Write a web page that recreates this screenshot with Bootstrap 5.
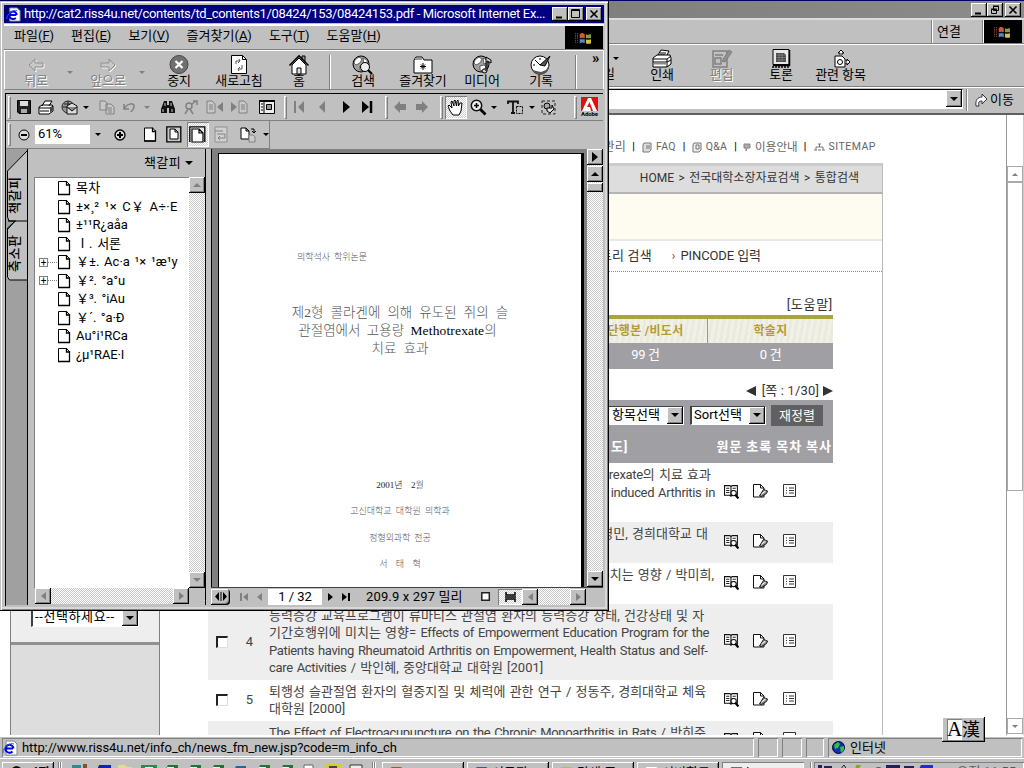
<!DOCTYPE html>
<html lang="ko">
<head>
<meta charset="utf-8">
<meta name="viewport" content="width=device-width, initial-scale=1">
<title>RISS4U</title>
<link href="https://cdn.jsdelivr.net/npm/bootstrap@5.3.0/dist/css/bootstrap.min.css" rel="stylesheet">
<style>
*{box-sizing:border-box}
body{width:1024px;height:768px;overflow:hidden;background:#c0c0c0;color:#000;font-family:Roboto,"Noto Sans CJK KR",sans-serif;font-size:13px;line-height:16px;white-space:nowrap}
svg{display:block;flex:none;overflow:visible}
.desk{position:relative;width:1024px;height:768px;overflow:hidden}
.raise{background:#c0c0c0;box-shadow:inset -1px -1px #000,inset 1px 1px #fff,inset -2px -2px #808080}
.sink{box-shadow:inset 1px 1px #808080,inset -1px -1px #fff}
.dither{background:repeating-conic-gradient(#fff 0 25%,#c8c8c8 0 50%) 0 0/2px 2px}
.ui-gray{background:#c0c0c0}
.cap{width:16px;height:14px;flex:none}
.off{color:#808080;text-shadow:1px 1px #fff}
.dn{width:0;height:0;border:4px solid transparent;border-top-color:#000;border-bottom:0}
.dn3{width:0;height:0;border:3px solid transparent;border-top-color:#000;border-bottom:0}
.dim{border-top-color:#808080}
/* main browser */
.m-title{height:18px;background:linear-gradient(90deg,#808080 60%,#8c8c8c);border-top:1px solid #000060;padding-right:3px}
.m-menu{height:26px;border-top:2px solid #dcdcdc;border-bottom:1px solid #808080}
.m-tool{height:43px;border-top:1px solid #fff;border-bottom:1px solid #808080;padding-left:600px}
.m-addr{height:24px;padding-top:1px;border-top:1px solid #fff}
.addr-in{width:963px;height:20px;background:#fff;border:1px solid #fff;border-top-color:#000;border-left-color:#000}
.m-body{height:622px;background:#fff;border-top:2px solid #606060;overflow:hidden;position:relative;margin-top:2px;flex:none}
.bt{display:flex;flex-direction:column;align-items:center;line-height:14px;letter-spacing:-.1px}
.side{width:150px;margin-left:10px;background:#ddd;border-right:1px solid #808080;border-left:1px solid #808080}
.side .upper{height:530px;background:#eee;border-bottom:3px solid #909090}
.combo{height:19px;background:#fff;border:1px solid #fff;border-top:1px solid #404040;border-left:2px solid #404040;color:#000;line-height:15px}
.mainc{width:723px}
.crumb{height:31px;background:#ddd;border-top:3px solid #ccc;border-bottom:2px solid #b4b4b4;border-right:1px solid #bbb;padding:0 23px 0 0;color:#333;line-height:24px;font-size:12px;word-spacing:1.500px}
.inner{height:592px;border-right:1px solid #bbb}
.res{width:625px;margin-left:48px}
.th-tex{height:28px;border-top:4px solid #a8a444;background:repeating-linear-gradient(100deg,#f2f1e8 0 3px,#ebeadf 3px 6px);color:#b59a35;font-weight:700;font-size:12px;letter-spacing:.3px}
.grayrow{background:#a0a0a4;color:#fff}
.hit{padding:3px 0;line-height:17.5px;color:#444;word-spacing:1px}
.hit:nth-child(even){background:#eee}
.hit .tx{width:447px;margin-left:2px}
.hit>svg{margin-bottom:2px}
.la{letter-spacing:-.33px}
.num{width:35px;text-align:center}
.chk{width:12px;height:12px;background:#fff;border:1px solid #ddd;border-top:2px solid #222;border-left:2px solid #222;margin-left:8px}
.sbar{width:16px;border-left:1px solid #999}
.sbtn{width:16px;height:16px;border:1px solid #aaa;background:#fff;flex:none}
.status{height:23px;border-top:2px solid #fff;padding:1px 2px;gap:4px;flex:none}
.pane{height:19px;box-shadow:inset 1px 1px #808080,inset -1px -1px #fff}
.task{height:10px;overflow:hidden;border-top:1px solid #fff;position:relative}
.tbt{height:24px;width:82px;padding:3px 8px;line-height:15px}
/* popup */
.pop{position:absolute;left:0;top:0;width:609px;height:611px;border-right:1px solid #000;border-bottom:1px solid #000;box-shadow:inset 1px 1px #c0c0c0,inset 2px 2px #fff,inset -1px -1px #808080,inset -3px -3px #d8d8d8;padding:5px 4px 4px;overflow:hidden;border-top:1px solid #000050}
.p-title{height:18px;background:#000080;color:#fff;padding:0 2px 0 2px;margin-top:-1px;letter-spacing:-.36px}
.p-menu{height:26px;border-top:2px solid #fff;border-bottom:1px solid #808080;padding-left:10px}
.p-menu span{line-height:20px}
.p-tool{height:40px;border:1px solid #fff;border-bottom-color:#808080;grid-template-columns:62px 10px 62px 10px 60px 60px 60px 4px 60px 60px 58px 60px 8px 1fr}
.vs{width:2px;background:#808080;border-right:1px solid #fff;align-self:stretch}
.grip{width:3px;height:23px;border:1px solid #fff;border-right-color:#808080;border-bottom-color:#808080}
.ac{height:513px;border-top:1px solid #000;border-left:1px solid #000;margin-top:3px;width:598px;margin-left:1px}
.a1{height:27px;border-bottom:1px solid #808080;grid-template-columns:7px 22px 22px 24px 10px 5px 22px 24px 10px 5px 22px 23px 25px 23px 6px 22px 5px 5px 22px 24px 23px 21px 6px 5px 22px 22px 5px 7px 22px 22px 10px 5px 23px 10px 22px 4px 10px 5px 23px}
.a2{height:28px;border-bottom:1px solid #808080;width:264px;border-right:1px solid #808080;grid-template-columns:7px 22px 55px 16px 27px 6px 22px 25px 23px 23px 5px 23px 11px}
.a1>*,.a2>*{justify-self:center;align-self:center}
.press{background:repeating-conic-gradient(#fff 0 25%,#d0d0d0 0 50%) 0 0/2px 2px;box-shadow:inset 1px 1px #808080,inset -1px -1px #fff;width:22px;height:23px;display:grid;place-items:center}
.zin{width:55px;height:19px;background:#fff;line-height:18px;padding-left:3px}
.tabs{width:22px;background:#a0a0a0;border-right:1px solid #000;position:relative}
.vt{position:absolute;transform:rotate(-90deg);transform-origin:0 0;left:1px;font-weight:500;line-height:16px;letter-spacing:.5px}
.bk{width:177px}
.tree{width:155px;height:411px;background:#fff;border-left:1px solid #808080;border-top:1px solid #808080;margin-left:6px;padding-top:1px}
.bi{height:18.5px;padding-left:22px;word-spacing:1.500px}
.bi span{margin-left:5px}
.pm{width:9px;height:9px;border:1px solid #808080;font-size:10px;line-height:7px;text-align:center}
.dots{width:9px;border-top:1px dotted #808080}
.sb{width:16px;height:16px;display:grid;place-items:center;flex:none}
.doc{width:376px;height:438px;background:#808080;padding:4px 0 0 6px;border-left:1px solid #000}
.sheet{width:366px;height:434px;background:#fff;border-top:1px solid #000;border-left:1px solid #000;border-right:3px solid #000;font-family:"Liberation Serif","Noto Sans CJK KR",serif;color:#555;font-weight:300;text-align:center}
.sheet div{height:18px;line-height:18px}
.ime{position:absolute;left:942px;top:717px;width:43px;height:25px;font-family:"Liberation Serif","Noto Sans CJK KR",serif;font-size:21px;line-height:22px}
</style>
</head>
<body>
<svg width="0" height="0" class="position-absolute">
<defs>
<symbol id="page" viewBox="0 0 14 16"><path d="M1.5 1.5h8l3 3v10h-11z" fill="#fff" stroke="#000"/><path d="M9.5 1v4H13M12.5 4v11M1 14.5h12" fill="none" stroke="#000" stroke-width="1.3"/></symbol>
<symbol id="book" viewBox="0 0 14 14"><path d="M.5 1.5h5l1 1 1-1h5v9h-5l-1 1-1-1h-5zM6.500 2v9" fill="#fff" stroke="#111"/><path d="M2 4h3M2 6h3M2 8h3M8 4h3M8 6h2" stroke="#222"/><circle cx="9" cy="8.500" r="2.500" fill="#fff" stroke="#111"/><path d="M10.500 10l3 3.500" stroke="#000" stroke-width="2"/></symbol>
<symbol id="abs" viewBox="0 0 15 14"><path d="M.5 .5h7l3.500 3.500v9H.5z" fill="#fff" stroke="#111"/><path d="M7.500 .5v3.500H11" stroke="#111" fill="none"/><path d="M6.500 12l4-6.500 4 1.500-1 2.500-5 3z" fill="#999" stroke="#111"/><path d="M8.500 10l4-3" stroke="#fff"/></symbol>
<symbol id="toc" viewBox="0 0 13 14"><path d="M.5.5h12v12H.5z" fill="#fff" stroke="#333"/><path d="M3 4h1M6 4h5M3 6.500h1M6 6.500h5M3 9h1M6 9h5" stroke="#333" stroke-width="1.200"/></symbol>
<symbol id="flag" viewBox="0 0 16 14"><path d="M4 4c2-2 3-1 5 0v4c-2-1-3-1-5 0z" fill="#d05a30"/><path d="M9.500 4c2 1 3 0 5 0v4c-2 1-3 1-5 0z" fill="#80a040"/><path d="M4 8.500c2-1 3-1 5 0v4c-2-1-3-1-5 0z" fill="#5888c8"/><path d="M9.500 8.500c2 1 3 1 5 0v4c-2 1-3 0-5 0z" fill="#d8c040"/><path d="M9.200 3v10M4 8.200h11" stroke="#000"/><path d="M0 3v10M2 3v10" stroke="#a05050" stroke-dasharray="1 1"/></symbol>
<symbol id="ie" viewBox="0 0 16 16"><path d="M4 1h8l3 3v11H4z" fill="#fff" stroke="#888"/><path d="M11.500 8.500a4 4 0 1 0-1 3M4 8.500h7" fill="none" stroke="#0000e0" stroke-width="2"/><path d="M1 13C0 8 8 2 12 4" fill="none" stroke="#2060ff"/></symbol>
<symbol id="globe" viewBox="0 0 20 20"><circle cx="9" cy="9" r="8" fill="#a0a0a0" stroke="#000"/><path d="M3 5l4-3 3 2-2 4-4 2-2-2zM11 3l4 2v3l-3 1zM8 11l4-1 2 2-3 4-3-1z" fill="#fff" stroke="#333" stroke-width=".7"/></symbol>
<symbol id="rt" viewBox="0 0 8 12"><path d="M1 0l7 6-7 6z"/></symbol>
</defs></svg>
<div class="desk">
<!-- main browser window -->
<div class="d-flex flex-column h-100 ui-gray">
  <div class="m-title d-flex justify-content-end align-items-center">
    <div class="cap raise"><svg width="16" height="14"><path d="M4 10.500h6" stroke="#000" stroke-width="2"/></svg></div>
    <div class="cap raise"><svg width="16" height="14"><path d="M6.500 3.500h5v4h-5zM4.500 6.500h5v4h-5z" fill="#c0c0c0" stroke="#000"/><path d="M6 3h6M4 6h6" stroke="#000"/></svg></div>
    <div class="cap raise" style="margin-left:2px"><svg width="16" height="14"><path d="M4.500 3.500l7 7M11.500 3.500l-7 7" stroke="#000" stroke-width="1.600"/></svg></div>
  </div>
  <div class="m-menu d-flex justify-content-end">
    <div class="vs"></div><div style="width:49px" class="ps-1 pt-1">연결</div><div class="vs"></div>
    <div class="bg-black d-grid" style="width:38px;place-items:center"><svg width="18" height="15"><use href="#flag"/></svg></div>
    <div style="width:2px"></div>
  </div>
  <div class="m-tool d-flex pt-1">
    <div class="d-flex flex-column" style="width:29px"><div class="dn3 ms-auto mt-2" style="margin-right:10px"></div><div style="margin-top:6px;margin-left:3px">일</div></div>
    <div class="bt" style="width:66px"><svg width="20" height="19"><path d="M6 6l3-5 8 1-3 6" fill="#fff" stroke="#000"/><path d="M8 4h6M7 6h6" stroke="#000"/><path d="M1 9l4-3h13l1 3v6l-4 3H1z" fill="#fff" stroke="#000"/><path d="M1 10h14l4-3M1 13h14l4-2M15 10v8" fill="none" stroke="#000"/><path d="M2 14.500h13" stroke="#888" stroke-width="2"/></svg>인쇄</div>
    <div class="bt off" style="width:53px"><svg width="20" height="19"><path d="M1 2h14v16H1zM3 6h8M3 9h6v6H3z" fill="none" stroke="#808080" stroke-width="1.500"/><path d="M10 12l7-11 3 2-7 10z" fill="#909090" stroke="#808080"/></svg>편집</div>
    <div class="bt" style="width:66px"><svg width="20" height="19"><path d="M2 .5h16v15H2z" fill="#e8e8e8" stroke="#000"/><path d="M1 18h18" stroke="#000" stroke-width="1.500" stroke-dasharray="2 1"/><path d="M18.500 1v15.500H2" stroke="#000" fill="none" stroke-width="1.500"/><path d="M5 4h8l2 2v7H5z" fill="#444"/><path d="M5 6h10M5 8.500h10M5 11h10M8 4v9M11 4v9" stroke="#999" stroke-width=".6"/></svg>토론</div>
    <div class="bt" style="width:53px"><svg width="20" height="19"><path d="M4 7h7l3 3v8H4z" fill="#fff" stroke="#000"/><circle cx="9" cy="13" r="2.500" fill="none" stroke="#000"/><path d="M9 6V4H7l3-3 3 3h-2v2M14 12h2v-2l3 3-3 3v-2h-2" fill="#fff" stroke="#000"/></svg>관련 항목</div>
  </div>
  <div class="m-addr d-flex">
    <div class="addr-in d-flex justify-content-end"><div class="raise d-grid" style="width:16px;height:17px;place-items:center"><div class="dn"></div></div></div>
    <div class="vs" style="margin-left:3px"></div>
    <div class="d-flex align-items-center" style="padding-left:7px"><svg width="13" height="14"><path d="M1 13C0 7 3 4 7 4V1l5 5-5 5V8C4 8 3 9 4 13z" fill="#fff" stroke="#333"/></svg><span style="margin-left:2px">이동</span></div>
  </div>
  <div class="m-body d-flex">
    <div class="side"><div class="upper d-flex flex-column justify-content-end align-items-start"><div class="combo d-flex" style="width:108px;margin:0 0 15px 20px;padding-left:2px"><span style="letter-spacing:.6px">--선택하세요--</span><div class="raise ms-auto d-grid" style="width:16px;place-items:center"><div class="dn"></div></div></div></div></div>
    <div class="mainc">
      <div class="d-flex justify-content-end align-items-center" style="height:48px;padding:16px 7px 0 0;color:#666;font-size:10.500px;letter-spacing:.3px">
        <span style="font-size:12px">관리</span><b class="text-black" style="margin:0 7px 0 6px;font-size:10px">|</b>
        <svg width="10" height="11"><path d="M2 1h7v7L7 10H1V3z" fill="#ddd" stroke="#777"/><path d="M4 4h4M4 6h4" stroke="#777"/></svg><span class="ms-1">FAQ</span><b class="text-black" style="margin:0 6px 0 7px;font-size:10px">|</b>
        <svg width="10" height="11"><path d="M2 1h7v7L7 10H1V3z" fill="#eee" stroke="#777"/><path d="M4 3h3v4H4z" fill="none" stroke="#777"/></svg><span class="ms-1">Q&amp;A</span><b class="text-black" style="margin:0 6px 0 7px;font-size:10px">|</b>
        <svg width="8" height="9"><path d="M1 1h6v4H4L3 8V5H1z" fill="#aaa" stroke="#888"/></svg><span style="font-size:11.500px;margin-left:4px;letter-spacing:.1px">이용안내</span><b class="text-black" style="margin:0 7px 0 6px;font-size:10px">|</b>
        <svg width="11" height="8"><path d="M5.500 1v3M2 7V4h7v3M0 7h3M4 7h3M8 7h3M4 1h3" fill="none" stroke="#777"/></svg><span class="ms-1" style="letter-spacing:.5px">SITEMAP</span>
      </div>
      <div class="crumb text-end">HOME &gt; 전국대학소장자료검색 &gt; 통합검색</div>
      <div class="inner">
        <div style="height:47px;background:#fefbf0;border-bottom:2px solid #e8e8e8"></div>
        <div class="d-flex align-items-center" style="height:31px;padding-left:440px;border-bottom:1px dotted #888;color:#333"><span style="letter-spacing:.15px">토리 검색</span><span style="color:#c02020;margin:0 5px 0 20px;font-size:12px">›</span><span style="letter-spacing:-.1px">PINCODE 입력</span></div>
        <div class="res">
          <div class="text-end" style="height:43px;padding-top:25px;color:#333;letter-spacing:.7px">[도움말]</div>
          <div class="th-tex d-flex align-items-center"><div class="text-center d-grid align-items-center h-100" style="width:500px;border-right:1px solid #b59a35;grid-template-columns:375px 125px"><span></span><span>단행본 /비도서</span></div><div class="text-center flex-fill">학술지</div></div>
          <div class="grayrow d-flex" style="height:26px;line-height:24px;letter-spacing:-.3px"><div class="text-center" style="width:125px;margin-left:375px">99 건</div><div class="flex-fill text-center">0 건</div></div>
          <div class="d-flex justify-content-end align-items-center" style="height:31px;padding-top:12px;color:#333"><svg width="10" height="12"><path d="M10 1v10L0 6z" fill="#333"/></svg><span style="margin:0 4px 0 6px;letter-spacing:.15px">[쪽 : <span style="color:#b01030">1</span>/30]</span><svg width="10" height="12"><path d="M0 1v10l10-5z" fill="#333"/></svg></div>
          <div class="grayrow" style="height:63px">
            <div class="d-flex justify-content-end align-items-center" style="height:30px;padding-right:10px">
              <div class="combo d-flex ps-1" style="width:78px;margin-right:6px"><span>항목선택</span><div class="raise ms-auto d-grid" style="width:16px;place-items:center"><div class="dn"></div></div></div>
              <div class="combo d-flex" style="width:76px;padding-left:2px;margin-right:5px"><span>Sort선택</span><div class="raise ms-auto d-grid" style="width:16px;place-items:center"><div class="dn"></div></div></div>
              <div class="text-center" style="width:52px;height:21px;line-height:21px;background:#606060">재정렬</div>
            </div>
            <div class="d-flex fw-bold" style="height:33px;line-height:33px"><span style="margin-left:403px;letter-spacing:.8px">도]</span><span class="ms-auto" style="letter-spacing:1px;margin-right:1px;word-spacing:-.3px">원문 초록 목차 복사</span></div>
          </div>
          <div>
            <div class="hit d-flex align-items-center"><div class="chk"></div><div class="num ms-1">1</div><div class="tx"><div class="d-flex justify-content-end" style="padding-right:5px">제2형 콜라겐에 의해 유도된 쥐의 슬관절염에서 고용량&nbsp;<span class="la">Methotrexate</span>의 치료 효과</div><div class="text-end la" style="padding-right:1px">Effects of high dose methotrexate on Type II Collagen induced Arthritis in</div><div>rats</div></div><svg class="ms-2" width="15" height="15"><use href="#book"/></svg><svg width="15" height="14" style="margin-left:14px"><use href="#abs"/></svg><svg width="13" height="14" style="margin-left:15px"><use href="#toc"/></svg></div>
            <div class="hit d-flex align-items-center"><div class="chk"></div><div class="num ms-1">2</div><div class="tx"><div class="text-end" style="padding-right:8px">류마티스 관절염 환자의 삶의 질에 관한 연구 / 이영민, 경희대학교 대</div><div>학원 [2001]</div></div><svg class="ms-2" width="15" height="15"><use href="#book"/></svg><svg width="15" height="14" style="margin-left:14px"><use href="#abs"/></svg><svg width="13" height="14" style="margin-left:15px"><use href="#toc"/></svg></div>
            <div class="hit d-flex align-items-center"><div class="chk"></div><div class="num ms-1">3</div><div class="tx"><div class="text-end" style="padding-right:2px">수중운동이 류마티스 관절염 환자에 미치는 영향 / 박미희,</div><div>대학원 [2001]</div></div><svg class="ms-2" width="15" height="15"><use href="#book"/></svg><svg width="15" height="14" style="margin-left:14px"><use href="#abs"/></svg><svg width="13" height="14" style="margin-left:15px"><use href="#toc"/></svg></div>
            <div class="hit d-flex align-items-center"><div class="chk"></div><div class="num ms-1">4</div><div class="tx">능력증강 교육프로그램이 류마티스 관절염 환자의 능력증강 상태, 건강상태 및 자<br>기간호행위에 미치는 영향= <span class="la">Effects of Empowerment Education Program for the</span><br><span class="la">Patients having Rheumatoid Arthritis on Empowerment, Health Status and Self-</span><br><span class="la">care Activities</span> / 박인혜, 중앙대학교 대학원 [2001]</div><svg class="ms-2" width="15" height="15"><use href="#book"/></svg><svg width="15" height="14" style="margin-left:14px"><use href="#abs"/></svg><svg width="13" height="14" style="margin-left:15px"><use href="#toc"/></svg></div>
            <div class="hit d-flex align-items-center"><div class="chk"></div><div class="num ms-1">5</div><div class="tx">퇴행성 슬관절염 환자의 혈중지질 및 체력에 관한 연구 / 정동주, 경희대학교 체육<br>대학원 [2000]</div><svg class="ms-2" width="15" height="15"><use href="#book"/></svg><svg width="15" height="14" style="margin-left:14px"><use href="#abs"/></svg><svg width="13" height="14" style="margin-left:15px"><use href="#toc"/></svg></div>
            <div class="hit d-flex"><div class="chk invisible"></div><div class="num ms-1"></div><div class="tx"><span class="la">The Effect of Electroacupuncture on the Chronic Monoarthritis in Rats</span> / 박히준,</div><svg class="ms-2" width="15" height="15" style="margin-top:8px"><use href="#book"/></svg><svg width="15" height="14" style="margin:8px 0 0 14px"><use href="#abs"/></svg><svg width="13" height="14" style="margin:8px 0 0 15px"><use href="#toc"/></svg></div>
          </div>
        </div>
      </div>
    </div>
    <div class="ms-auto d-flex flex-column sbar" style="padding-top:51px;margin-right:1px">
      <div class="sbtn d-grid" style="place-items:center"><div class="dn3 dim" style="transform:rotate(180deg)"></div></div>
      <div class="sbtn" style="height:309px"></div>
      <div class="sbtn d-grid mt-auto" style="place-items:center;margin-bottom:1px"><div class="dn3 dim"></div></div>
    </div>
    <div style="width:1px;background:#ccc"></div>
  </div>
  <div class="status d-flex">
    <div class="pane d-flex align-items-center" style="width:752px"><svg width="16" height="16"><use href="#ie"/></svg><span style="margin-left:4px;letter-spacing:-.09px">http://www.riss4u.net/info_ch/news_fm_new.jsp?code=m_info_ch</span></div>
    <div class="pane" style="width:20px"></div><div class="pane" style="width:20px"></div><div class="pane" style="width:18px"></div>
    <div class="pane flex-fill d-flex align-items-center ps-1"><svg width="13" height="13"><circle cx="6.500" cy="6.500" r="6" fill="#1030b0" stroke="#003"/><path d="M2 4l4-3 2 2-2 4-3 1zM8 6l4-1v4l-3 3z" fill="#30c040"/></svg><span style="margin-left:5px">인터넷</span></div>
  </div>
  <div class="task d-flex" style="padding-top:3px">
    <div class="tbt raise fw-bold" style="width:52px;margin-left:2px">● 시작</div>
    <div class="vs ms-1"></div><div class="vs"></div>
    <svg width="300" height="8" style="margin-left:10px"><path d="M0 3h9v5H0z" fill="#308898"/><path d="M11 2h4v6h-4z" fill="#805030"/><path d="M27 3h12v5H25z" fill="#1020c0"/><path d="M46 3h7l2 2h5v3H46z" fill="#e0dc90"/><path d="M69 3h16v5H69z" fill="#308848"/><path d="M73 5h8v3h-8z" fill="#fff"/><path d="M96 3h10v5H93zM119 3h10v5h-12zM142 3h10v5h-12zM188 3h10v5h-12zM211 3h10v5h-12z" fill="#287038"/><path d="M95 5h7v3h-7zM118 5h7v3h-7zM141 5h7v3h-7zM187 5h7v3h-7zM210 5h7v3h-7z" fill="#eee"/><path d="M164 4h10v4h-12z" fill="#2860b0"/><path d="M232 3h9v5h-9z" fill="#fff" stroke="#666"/><path d="M253 2h16v6h-16z" fill="#d8d020"/><path d="M257 4h8v4h-8z" fill="#444"/><path d="M278 3h12v5h-12z" fill="#eee" stroke="#333"/></svg>
    <div class="vs"></div><div class="vs" style="margin-right:6px"></div>
    <div class="d-flex" style="gap:3px"><div class="tbt raise"><span class="me-1" style="color:#c05020">■</span>Micro...</div><div class="tbt raise"><span class="me-1" style="color:#4050c0">■</span>서류작...</div><div class="tbt raise"><span class="me-1" style="color:#b8c040">■</span>탐색 중...</div><div class="tbt raise"><span class="me-1" style="color:#fff">■</span>서비학교</div><div class="tbt sink" style="background:#eee">□ http...</div></div>
    <div class="vs" style="margin-left:6px"></div>
    <div class="sink flex-fill d-flex" style="height:22px;padding:2px 8px 0 4px;margin-left:2px"><svg width="120" height="8"><path d="M0 1h4v6H0zM6 2h8v5H6zM68 1h14v6H68zM86 2h10v5H86z" fill="#202060"/><path d="M22 6l4-5 3 5M56 6a5 4 0 0 1 9 0" fill="none" stroke="#222"/><path d="M38 1h5l-3 6h-3z" fill="#90a020"/><path d="M103 1h12v6h-15z" fill="#2030b0"/></svg><span class="ms-auto" style="color:#555;line-height:15px">오전 11:55</span></div>
  </div>
</div>
<!-- popup window -->
<div class="pop ui-gray">
  <div class="p-title d-flex align-items-center"><svg width="15" height="15"><use href="#ie"/></svg><span style="margin-left:3px">http://cat2.riss4u.net/contents/td_contents1/08424/153/08424153.pdf - Microsoft Internet Ex...</span>
    <div class="cap raise ms-auto"><svg width="16" height="14"><path d="M4 10.500h6" stroke="#000" stroke-width="2"/></svg></div>
    <div class="cap raise"><svg width="16" height="14"><path d="M3.500 2.500h8v8h-8zM3 3.500h9" fill="none" stroke="#000"/></svg></div>
    <div class="cap raise" style="margin-left:2px"><svg width="16" height="14"><path d="M4.500 3.500l7 7M11.500 3.500l-7 7" stroke="#000" stroke-width="1.600"/></svg></div>
  </div>
  <div class="p-menu d-flex" style="gap:17px;margin-top:1px"><span>파일(<u>F</u>)</span><span>편집(<u>E</u>)</span><span>보기(<u>V</u>)</span><span>즐겨찾기(<u>A</u>)</span><span>도구(<u>T</u>)</span><span>도움말(<u>H</u>)</span>
    <div class="bg-black d-grid ms-auto" style="width:38px;height:23px;place-items:center;margin-right:1px"><svg width="18" height="15"><use href="#flag"/></svg></div></div>
  <div class="p-tool d-grid pt-1">
    <div class="bt off"><svg width="18" height="19"><path d="M2 10l6-6v4h8v4H8v4z" fill="#c8c8c8" stroke="#fff" transform="translate(1 1)"/><path d="M2 10l6-6v4h8v4H8v4z" fill="#c8c8c8" stroke="#909090"/></svg>뒤로</div>
    <div class="dn3 dim mt-3"></div>
    <div class="bt off"><svg width="18" height="19"><path d="M16 10l-6-6v4H2v4h8v4z" fill="#c8c8c8" stroke="#fff" transform="translate(1 1)"/><path d="M16 10l-6-6v4H2v4h8v4z" fill="#c8c8c8" stroke="#909090"/></svg>앞으로</div>
    <div class="dn3 dim mt-3"></div>
    <div class="bt"><svg width="20" height="19"><circle cx="10" cy="9.500" r="9" fill="#707070" stroke="#444"/><path d="M6.500 6l7 7M13.500 6l-7 7" stroke="#fff" stroke-width="2.200"/></svg>중지</div>
    <div class="bt"><svg width="18" height="19"><path d="M1.500.5h11l4 4v14h-15z" fill="#fff" stroke="#000"/><path d="M12.500.5v4h4" fill="none" stroke="#000"/><path d="M6 9V6h4l-1-2M10 6L8 8M12 10v4H8l1 2M8 14l2-2" stroke="#555" fill="none"/></svg>새로고침</div>
    <div class="bt"><svg width="20" height="20"><path d="M13 5V1h3v7" fill="#999" stroke="#000"/><path d="M3 10v9h14v-9L10 3z" fill="#fff" stroke="#000"/><path d="M0.500 10.500L10 1l9.500 9.500" fill="none" stroke="#000" stroke-width="1.600"/><path d="M8 13h4v6H8z" fill="#ddd" stroke="#000"/></svg><span style="margin-top:-1px">홈</span></div>
    <div class="vs"></div>
    <div class="bt"><svg width="22" height="19"><use href="#globe" width="20" height="20"/><circle cx="13" cy="12" r="4.500" fill="#eee" stroke="#000"/><path d="M16 15l4 4" stroke="#000" stroke-width="2.200"/></svg>검색</div>
    <div class="bt"><svg width="20" height="19"><path d="M1 18V5l2-3h6l2 3h8v13z" fill="#fff" stroke="#000"/><path d="M2 3h7v2H2z" fill="#999"/><path d="M10 8v7M7 11.500h6M8 9.500l4 4M12 9.500l-4 4" stroke="#000"/></svg>즐겨찾기</div>
    <div class="bt"><svg width="20" height="19"><use href="#globe" width="20" height="20"/><path d="M14 16V2l5 3v3l-4-2v10a2.500 2 0 1 1-2-2" fill="#ccc" stroke="#000"/></svg>미디어</div>
    <div class="bt"><svg width="22" height="19"><circle cx="10" cy="10" r="9" fill="#fff" stroke="#000"/><path d="M2 15a9 9 0 0 0 17-5l-3 5-5 2z" fill="#555"/><path d="M10 10l10-9-5 10zM10 10L5 5M10 3v2M3 10h2" fill="#555" stroke="#000"/></svg>기록</div>
    <div class="vs ms-1"></div>
    <div class="fw-bold" style="padding-left:13px;margin-top:-5px;font-size:15px">»</div>
  </div>
  <div class="ac">
    <div class="a1 d-grid">
      <div class="grip"></div>
      <svg width="14" height="14"><path d="M.5.5h13v13H2L.5 12z" fill="#222" stroke="#000"/><path d="M3 1h8v5H3z" fill="#ddd"/><path d="M4 9h6v4H4z" fill="#aaa"/></svg>
      <svg width="16" height="14"><path d="M4 6l3-5h7l-3 5M1 7l3-2h10l1 1v5l-4 3H1z" fill="#fff" stroke="#000"/><path d="M1 8h11l3-2M2 11h9" fill="none" stroke="#000"/><path d="M12 8v5l3-3V7z" fill="#444"/></svg>
      <svg width="17" height="15"><circle cx="7" cy="7" r="6" fill="#999" stroke="#222"/><path d="M3 4h7M2 7h10M7 1v12" stroke="#222"/><path d="M6 6l5-3 5 3v8H6z" fill="#ddd" stroke="#111"/><path d="M6 7l5 4 5-4" fill="#888" stroke="#111"/></svg>
      <div class="dn3"></div><div class="vs"></div>
      <svg width="16" height="14"><path d="M1 1h5l2 2v7H1zM7 4h5l3 3v7H7z" fill="#c8c8c8" stroke="#808080"/><path d="M9 8h4M9 10h4M9 12h4" stroke="#808080"/></svg>
      <svg width="14" height="12"><path d="M1 3v5h5M1 8C5 1 12 2 11 6c0 3-3 4-3 5" fill="none" stroke="#808080" stroke-width="1.500"/></svg>
      <div class="dn3 dim"></div><div class="vs"></div>
      <svg width="16" height="14"><path d="M4 1h3v4h2V1h3l3 8v4H9V8H7v5H1V9z" fill="#111"/><path d="M3 9v3M12 9v3M5 3v3M11 3v3" stroke="#ccc"/></svg>
      <svg width="16" height="15"><circle cx="6" cy="6" r="3" fill="none" stroke="#808080" stroke-width="1.500"/><path d="M5 9l-3 5M7 9l3 5M9 4l4-3M10 1h4v4" stroke="#808080" fill="none" stroke-width="1.500"/></svg>
      <svg width="18" height="14"><path d="M1 1h5l3 3v9H1z" fill="#c8c8c8" stroke="#808080"/><path d="M3 5h4M3 7h4M3 9h4" stroke="#808080"/><path d="M17 2v10l-6-5z" fill="#808080"/></svg>
      <svg width="18" height="14"><path d="M9 1h5l3 3v9H9z" fill="#c8c8c8" stroke="#808080"/><path d="M11 5h4M11 7h4M11 9h4" stroke="#808080"/><path d="M1 2v10l6-5z" fill="#808080"/></svg>
      <div class="vs"></div>
      <svg width="16" height="14"><path d="M.5.5h15v13H.5zM5 1v12" fill="#eee" stroke="#000"/><path d="M0 1h16" stroke="#000" stroke-width="2"/><path d="M2 4h2M2 7h2M2 10h2" stroke="#000"/><path d="M7.500 4.500h5v5h-5z" fill="#999" stroke="#000"/></svg>
      <div class="vs"></div><div class="grip"></div>
      <svg width="10" height="12"><path d="M1 0v12" stroke="#808080" stroke-width="2"/><path d="M10 0v12L4 6z" fill="#808080"/></svg>
      <svg width="8" height="12"><path d="M7 0v12L1 6z" fill="#808080"/></svg>
      <svg width="8" height="12"><use href="#rt"/></svg>
      <svg width="11" height="12"><path d="M0 0v12l7-6z"/><path d="M9 0v12" stroke="#000" stroke-width="2.500"/></svg>
      <div class="vs"></div><div class="grip"></div>
      <svg width="12" height="12" fill="#808080"><path d="M0 6l6-6v3h6v6H6v3z"/></svg>
      <svg width="12" height="12" fill="#808080"><path d="M12 6L6 0v3H0v6h6v3z"/></svg>
      <div class="vs"></div><div class="grip"></div>
      <div class="press"><svg width="18" height="17"><path d="M6 16L3 12 1 7l1-1 3 3L4 3l1-1 2 5V2l1-1 1.500 6L10 2l1-1 .5 6L13 4l2 0-1 8-2 4z" fill="#fff" stroke="#000"/></svg></div>
      <svg width="17" height="17"><circle cx="6.500" cy="6.500" r="5.200" fill="#eee" stroke="#111" stroke-width="1.500"/><path d="M4 6.500h5M6.500 4v5" stroke="#000" stroke-width="1.500"/><path d="M10.500 10.500l5 5" stroke="#000" stroke-width="2.800"/></svg>
      <div class="dn3"></div><div class="vs"></div>
      <svg width="17" height="15"><path d="M1 4V1.500h10V4M6 1v12M4 13h4" fill="none" stroke="#111" stroke-width="1.800"/><path d="M9.500 6.500h6v7h-6z" fill="none" stroke="#000" stroke-dasharray="2 1"/></svg>
      <div class="dn3"></div>
      <svg width="15" height="15"><path d="M1 1h13v13H1z" fill="none" stroke="#222" stroke-dasharray="3 2"/><circle cx="6" cy="6" r="3" fill="#aaa" stroke="#000"/><path d="M6 8h5V5l2 4-4 4-3-2z" fill="#ddd" stroke="#000"/></svg>
      <div class="vs"></div><div></div><div class="grip"></div>
      <div class="text-center fw-bold" style="width:19px;font-size:6px;line-height:6px;letter-spacing:-.1px"><svg width="17" height="14" style="margin:0 1px"><path d="M0 0h17v14H0z" fill="#e01010"/><path d="M1 14L7 1h3l6 13h-4L8.500 5 6 10h3l1 4H7" fill="#fff"/></svg>Adobe</div>
    </div>
    <div class="a2 d-grid">
      <div class="grip"></div>
      <svg width="12" height="12"><circle cx="6" cy="6" r="5" fill="#ddd" stroke="#000"/><path d="M3 6h6" stroke="#000" stroke-width="2"/></svg>
      <div class="zin">61%</div><div class="dn3"></div>
      <svg width="12" height="12"><circle cx="6" cy="6" r="5" fill="#ddd" stroke="#000" stroke-width="1.300"/><path d="M3 6h6M6 3v6" stroke="#000" stroke-width="2"/></svg>
      <div class="vs"></div>
      <svg width="14" height="17"><use href="#page"/></svg>
      <svg width="16" height="17"><path d="M.8.8h14v15H.8z" fill="#c8c8c8" stroke="#000" stroke-width="1.300"/><path d="M4 3h5l3 3v7H4zM9 3v3h3" fill="#fff" stroke="#000"/></svg>
      <div class="press" style="height:25px"><svg width="17" height="17"><path d="M.8 16V.8h15V16" fill="none" stroke="#000" stroke-width="1.300"/><path d="M3 3h7l4 4v9H3zM10 3v4h4" fill="#fff" stroke="#000" stroke-width="1.200"/></svg></div>
      <svg width="14" height="16"><path d="M1 0v15h12V0z" fill="#d0d0d0" stroke="#909090"/><path d="M1 4h8M3 7h8v4H4M6 9l-2 2 2 2" fill="none" stroke="#808080"/></svg>
      <div class="vs"></div>
      <svg width="17" height="16"><path d="M1 1h5l3 3v8H1zM6 1v3h3" fill="#fff" stroke="#000"/><path d="M9 8h4l2 2v5H9z" fill="#ccc" stroke="#808080"/><path d="M11 2h3v4M12 4l2 2 2-2" fill="none" stroke="#000"/></svg>
      <div class="dn3"></div>
    </div>
    <div class="d-flex">
      <div class="tabs" style="height:456px">
        <svg width="22" height="132"><path d="M21.500 0v131H3.500L1.500 128V79l8-7H3L1.500 68V22L21 2" fill="#c0c0c0" stroke="#000"/><path d="M2 72h20M9 72l-7 8" stroke="#000"/></svg>
        <div class="vt" style="top:65px">책갈피</div><div class="vt" style="top:123px">축소판</div>
      </div>
      <div class="bk">
        <div class="d-flex justify-content-end align-items-center" style="height:28px;padding-right:12px"><span style="letter-spacing:.4px">책갈피</span><div class="dn ms-1"></div></div>
        <div class="d-flex">
          <div class="tree">
            <div class="bi d-flex align-items-center"><svg width="14" height="16"><use href="#page"/></svg><span style="letter-spacing:.4px">목차</span></div>
            <div class="bi d-flex align-items-center"><svg width="14" height="16"><use href="#page"/></svg><span style="letter-spacing:.4px">±×¸² ¹× C￥ A÷·E</span></div>
            <div class="bi d-flex align-items-center"><svg width="14" height="16"><use href="#page"/></svg><span>±¹¹R¿aåa</span></div>
            <div class="bi d-flex align-items-center"><svg width="14" height="16"><use href="#page"/></svg><span>Ⅰ. 서론</span></div>
            <div class="bi d-flex align-items-center" style="padding-left:4px"><div class="pm">+</div><div class="dots"></div><svg width="14" height="16"><use href="#page"/></svg><span>￥±. Ac·a ¹× ¹æ¹y</span></div>
            <div class="bi d-flex align-items-center" style="padding-left:4px"><div class="pm">+</div><div class="dots"></div><svg width="14" height="16"><use href="#page"/></svg><span style="letter-spacing:-.1px">￥². °a°u</span></div>
            <div class="bi d-flex align-items-center"><svg width="14" height="16"><use href="#page"/></svg><span style="letter-spacing:-.1px">￥³. °iAu</span></div>
            <div class="bi d-flex align-items-center"><svg width="14" height="16"><use href="#page"/></svg><span style="letter-spacing:-.1px">￥´. °a·Ð</span></div>
            <div class="bi d-flex align-items-center"><svg width="14" height="16"><use href="#page"/></svg><span>Au°i¹RCa</span></div>
            <div class="bi d-flex align-items-center"><svg width="14" height="16"><use href="#page"/></svg><span style="letter-spacing:-.1px">¿µ¹RAE·I</span></div>
          </div>
          <div class="dither d-flex flex-column justify-content-between"><div class="sb raise"><div class="dn dim" style="transform:rotate(180deg)"></div></div><div class="sb raise"><div class="dn dim"></div></div></div>
        </div>
        <div class="d-flex justify-content-between dither" style="width:154px;margin-left:7px;height:16px"><div class="sb raise"><svg width="5" height="8"><path d="M5 0v8L0 4z" fill="#808080"/></svg></div><div class="sb raise"><svg width="5" height="8"><path d="M0 0v8l5-4z" fill="#808080"/></svg></div></div>
      </div>
      <div style="width:6px;border-left:1px solid #000"></div>
      <div style="width:392px">
        <div class="d-flex">
          <div class="doc"><div class="sheet">
            <div style="margin-top:94px;font-size:9px;text-align:left;padding-left:78px;letter-spacing:-.05px;word-spacing:2px">의학석사 학위논문</div>
            <div style="margin-top:38px;font-size:13.500px;letter-spacing:.05px;word-spacing:3.600px">제2형 콜라겐에 의해 유도된 쥐의 슬</div>
            <div style="font-size:13.500px;padding-right:5px;word-spacing:3px">관절염에서 고용량 <span class="text-black" style="font-weight:400;letter-spacing:.15px">Methotrexate</span>의</div>
            <div style="font-size:13.500px;word-spacing:4px">치료 효과</div>
            <div style="margin-top:118px;font-size:9px;color:#222;word-spacing:2px">2001년 &nbsp;2월</div>
            <div style="margin-top:8px;font-size:9px;word-spacing:2px">고신대학교 대학원 의학과</div>
            <div style="margin-top:9px;font-size:9px;word-spacing:2px;letter-spacing:-.1px">정형외과학 전공</div>
            <div style="margin-top:8px;font-size:9px;word-spacing:6px">서 태 혁</div>
          </div></div>
          <div class="d-flex flex-column dither" style="width:16px;height:438px"><div class="sb raise"><svg width="6" height="10"><path d="M0 0v10l6-5z"/></svg></div><div class="sb raise" style="margin-top:1px"><div class="dn" style="transform:rotate(180deg)"></div></div><div class="raise" style="height:9px;margin-top:1px"></div><div class="sb raise mt-auto"><div class="dn"></div></div></div>
        </div>
        <div class="d-flex align-items-center" style="height:18px;border-top:1px solid #404040">
          <div class="raise d-grid" style="width:19px;height:16px;border-radius:0 4px 4px 0;place-items:center"><svg width="12" height="9"><path d="M4 0v9L0 4.500zM8 0v9l4-4.500z"/><path d="M6 0v9" stroke="#000"/></svg></div>
          <svg width="8" height="8" style="margin-left:10px"><path d="M1 0v8" stroke="#808080" stroke-width="2"/><path d="M8 0v8L3 4z" fill="#808080"/></svg>
          <svg width="5" height="8" style="margin-left:9px"><path d="M5 0v8L0 4z" fill="#808080"/></svg>
          <div class="bg-white text-center" style="width:54px;height:16px;line-height:15px;margin-left:6px">1 / 32</div>
          <svg width="5" height="8" style="margin-left:6px"><path d="M0 0v8l5-4z"/></svg>
          <svg width="8" height="8" style="margin-left:9px"><path d="M0 0v8l5-4z"/><path d="M7 0v8" stroke="#000" stroke-width="2"/></svg>
          <div style="width:97px;margin-left:16px;letter-spacing:.15px">209.9 x 297 밀리</div>
          <svg width="9" height="9" style="margin-left:18px"><path d="M.8.8h7.500v7.500H.8z" fill="#fff" stroke="#222" stroke-width="1.500"/></svg>
          <div class="press" style="height:16px;margin-left:8px;width:24px"><svg width="11" height="10"><path d="M1 0v3h9V0M1 10V7h9v3M0 5h11" stroke="#000" fill="none" stroke-width="1.500"/></svg></div>
          <div class="sb raise"><svg width="5" height="8"><path d="M5 0v8L0 4z" fill="#808080"/></svg></div><div class="dither flex-fill h-100"></div><div class="sb raise" style="margin-right:17px"><svg width="5" height="8"><path d="M0 0v8l5-4z" fill="#808080"/></svg></div>
        </div>
      </div>
    </div>
  </div>
</div>
<div class="ime raise d-flex align-items-center justify-content-center"><span class="sink bg-light lh-1">A</span><span style="font-size:18px">漢</span></div>
</div>
<script src="https://cdn.jsdelivr.net/npm/bootstrap@5.3.0/dist/js/bootstrap.bundle.min.js"></script>
</body>
</html>
